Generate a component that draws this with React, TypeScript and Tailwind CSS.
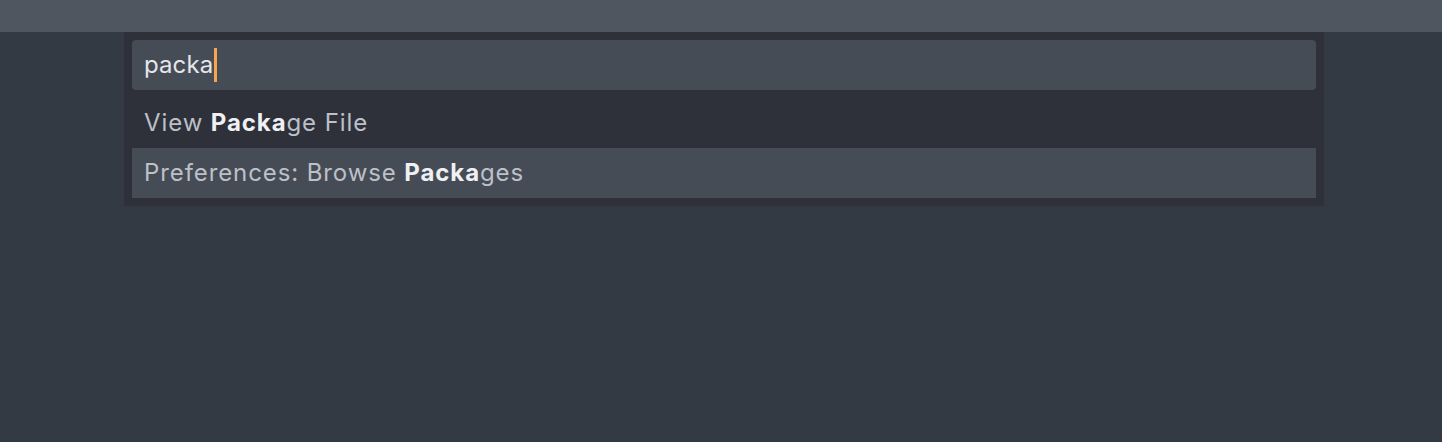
const font = { fontFamily: "Inter, 'Noto Sans', sans-serif" };

const items = [
  { before: "View ", match: "Packa", after: "ge File", selected: false },
  { before: "Preferences: Browse ", match: "Packa", after: "ges", selected: true },
];

export default function App() {
  return (
    <div className="w-[1442px] h-[442px] bg-[#333a44] flex flex-col" style={font}>
      {/* Title strip */}
      <div className="h-8 bg-[#4f5660]" />

      {/* Command palette */}
      <div className="ml-[124px] w-[1200px] bg-[#2e3139] p-2 flex flex-col">
        <div className="h-[50px] rounded bg-[#464c56] flex items-center px-3">
          <span className="text-[24px] text-[#e4e6ea] tracking-[0.1px]">packa</span>
          <span className="w-[3px] h-[34px] bg-[#f7a64f] ml-px" />
        </div>
        <div className="mt-2 flex flex-col">
          {items.map((item, i) => (
            <div
              key={i}
              className={`h-[50px] flex items-center px-3 text-[24px] tracking-[0.9px] text-[#bcc0c8] ${
                item.selected ? "bg-[#464c56]" : ""
              }`}
            >
              <span className="whitespace-pre">{item.before}</span>
              <span className="font-bold text-[#eef0f3]">{item.match}</span>
              <span>{item.after}</span>
            </div>
          ))}
        </div>
      </div>
    </div>
  );
}
